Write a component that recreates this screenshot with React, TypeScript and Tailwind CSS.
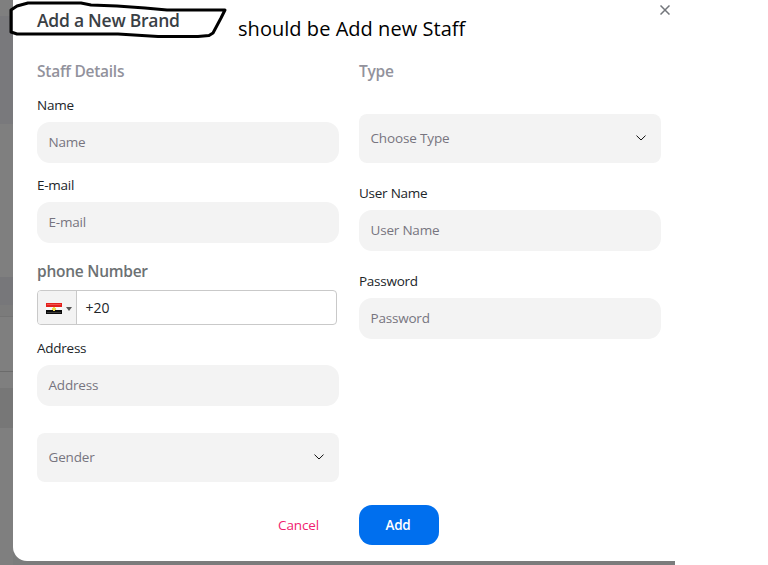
import React from "react";

const textBase = "block whitespace-nowrap";

function Label({ text, className }: { text: string; className: string }) {
  return <label className={`${textBase} h-5 text-[13.5px] leading-[21px] tracking-[-0.25px] text-[#212529] ${className}`}>{text}</label>;
}

function Heading({ text, className }: { text: string; className: string }) {
  return <h2 className={`${textBase} h-6 text-[15.5px] leading-[25px] font-semibold tracking-[-0.25px] ${className}`}>{text}</h2>;
}

function Field({ text }: { text: string }) {
  return (
    <div className="flex h-[41px] items-center rounded-[13px] bg-[#f3f3f3] pr-3 pb-px pl-[11.5px] text-[13.5px] tracking-[-0.2px] text-[#77757f]">
      <span className={textBase}>{text}</span>
    </div>
  );
}

function Select({ text }: { text: string }) {
  return (
    <div className="flex h-[49px] items-center justify-between rounded-[8px] bg-[#f3f3f3] pr-[15px] pb-px pl-[11.5px] text-[13.5px] tracking-[-0.15px] text-[#77757f]">
      <span className={textBase}>{text}</span>
      <svg width="10" height="6" viewBox="0 0 10 6" fill="none" stroke="#111" strokeWidth="1">
        <path d="M0.5 0.6 L5 5 L9.5 0.6" />
      </svg>
    </div>
  );
}

function Flag() {
  return (
    <svg className="shrink-0" width="16" height="11" viewBox="0 0 16 11" shapeRendering="crispEdges">
      <rect width="16" height="11" fill="#f8f8f8" />
      <rect width="16" height="4" fill="#e3201c" />
      <rect x="1" y="1" width="14" height="1" fill="#f0524c" />
      <rect y="7" width="16" height="4" fill="#0c0c0c" />
      <rect x="1" y="9" width="14" height="1" fill="#3a3a3a" />
      <path d="M7 4 H9 V5 H10 V7 H9 V8 H7 V7 H6 V5 H7 Z" fill="#efd84c" />
    </svg>
  );
}

export default function App() {
  return (
    <div className="h-[565px] w-[768px] overflow-hidden bg-white font-['Open_Sans','Noto_Sans',sans-serif]">
      <div className="relative flex h-[565px] w-[675px] bg-[#7b7c7c]">
        <div className="h-[565px] w-[13px] shrink-0 bg-[#7f7f7f]">
          <div className="h-[16px] bg-[#7f7f7f]" />
          <div className="h-[108px] bg-[#79797c]" />
          <div className="h-[153px] bg-[#7f7f7f]" />
          <div className="h-[28px] bg-[#77777a]" />
          <div className="h-[11px] bg-[#7b7b7b]" />
          <div className="h-px bg-[#747474]" />
          <div className="h-[54px] bg-[#7f7f7f]" />
          <div className="h-px bg-[#6b6b6b]" />
          <div className="h-[16px] bg-[#7f7f7f]" />
          <div className="h-[40px] bg-[#777777]" />
        </div>
        <main className="h-[561px] w-[662px] rounded-bl-[14px] bg-white px-6">
          <header className="flex h-[59px] items-start justify-between">
            <div className="flex">
              <h1 className={`${textBase} mt-[8px] w-[201px] text-[17.5px] leading-6 font-semibold tracking-[-0.25px] text-[#3a4045]`}>Add a New Brand</h1>
              <p className={`${textBase} mt-[15px] text-[20px] leading-7 tracking-[0.04px] text-black`}>should be Add new Staff</p>
            </div>
            <svg className="mt-[5px] -mr-[19px] shrink-0" width="10" height="10" viewBox="0 0 10 10" stroke="#73767b" strokeWidth="1.5">
              <path d="M0.5 0.5 L9.5 9.5 M9.5 0.5 L0.5 9.5" />
            </svg>
          </header>
          <div className="flex h-[446px] gap-5">
            <section className="w-[302px] shrink-0">
              <Heading text="Staff Details" className="text-[#92929c]" />
              <Label text="Name" className="mt-3 mb-[7px]" />
              <Field text="Name" />
              <Label text="E-mail" className="mt-[12px] mb-[7px]" />
              <Field text="E-mail" />
              <Heading text="phone Number" className="mt-[16px] mb-[7px] text-[#6c7173]" />
              <div className="flex h-[35px] w-[300px] overflow-hidden rounded-[4px] border border-[#c9c9c9]">
                <div className="flex w-[39px] items-center gap-1 border-r border-[#c9c9c9] bg-[#f3f3f3] pt-[2px] pl-2">
                  <Flag />
                  <svg width="6" height="4" viewBox="0 0 6 4"><path d="M0 0 H6 L3 4 Z" fill="#555" /></svg>
                </div>
                <span className={`${textBase} pl-[8.5px] text-[14px] leading-[34px] text-[#212529]`}>+20</span>
              </div>
              <Label text="Address" className="mt-[13px] mb-[7px]" />
              <Field text="Address" />
              <div className="mt-[27px]"><Select text="Gender" /></div>
            </section>
            <section className="w-[302px] shrink-0">
              <Heading text="Type" className="mb-[31px] text-[#92929c]" />
              <Select text="Choose Type" />
              <Label text="User Name" className="mt-5 mb-[7px]" />
              <Field text="User Name" />
              <Label text="Password" className="mt-5 mb-[7px]" />
              <Field text="Password" />
            </section>
          </div>
          <footer className="flex h-10 items-center text-[13.5px]">
            <button className={`${textBase} ml-[241px] w-[81px] text-left tracking-[-0.1px] text-[#f01d70]`}>Cancel</button>
            <button className={`${textBase} h-10 w-20 rounded-[13px] bg-[#006fee] pr-[2px] font-semibold tracking-[-0.2px] text-white`}>Add</button>
          </footer>
        </main>
        <svg className="absolute top-0 left-0" width="240" height="44" viewBox="0 0 240 44" fill="none" stroke="#000" strokeWidth="3" strokeLinejoin="round" strokeLinecap="round">
          <path d="M28 3 L81 3 L91 5 L117 6 L145 8 L167 10 L225 10 L221 18 L213 33 L209 35.5 L198 36.5 L158 36.5 L118 34 L17 34 L11 32 L11 10 L17 6 L28 3" />
        </svg>
      </div>
    </div>
  );
}
